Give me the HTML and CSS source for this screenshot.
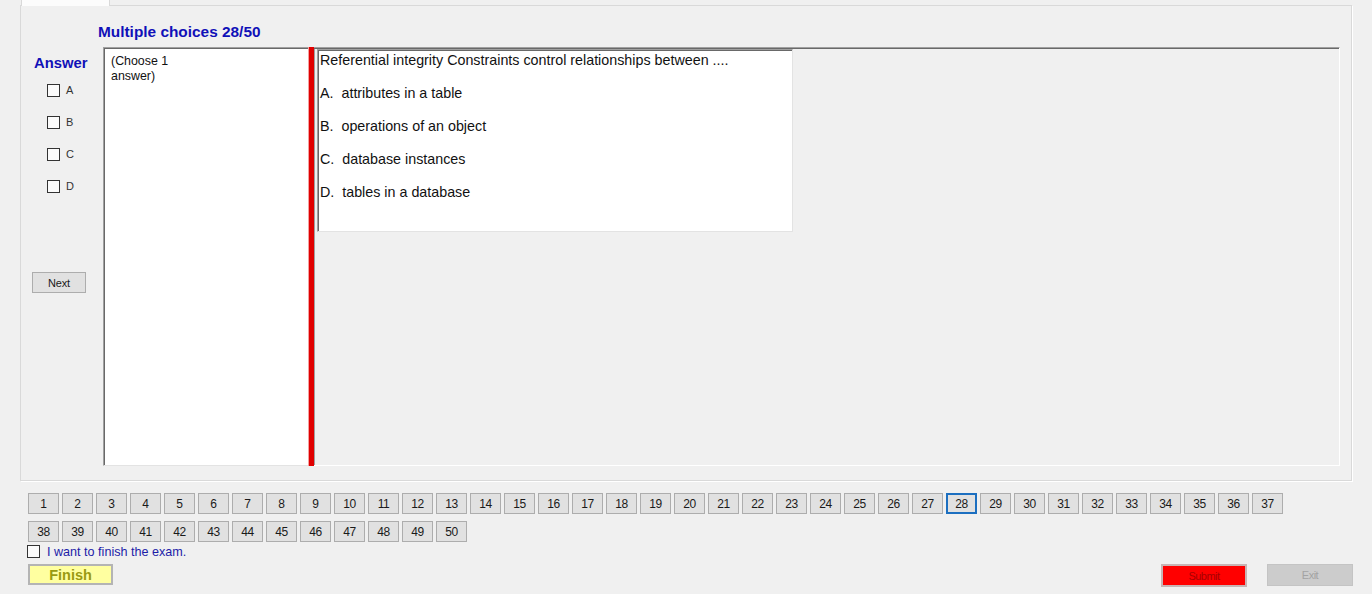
FILE: index.html
```html
<!DOCTYPE html>
<html>
<head>
<meta charset="utf-8">
<link rel="stylesheet" href="styles.css">
</head>
<body>
<div class="tabs"><div class="tab"></div></div>
<div class="tabpage">
  <div class="title">Multiple choices 28/50</div>
  <div class="main">
    <div class="answers">
      <div class="ans-h">Answer</div>
      <label class="opt-cb"><span class="cb"></span><span>A</span></label>
      <label class="opt-cb"><span class="cb"></span><span>B</span></label>
      <label class="opt-cb"><span class="cb"></span><span>C</span></label>
      <label class="opt-cb"><span class="cb"></span><span>D</span></label>
      <button class="btn next">Next</button>
    </div>
    <div class="choose">(Choose 1<br>answer)</div>
    <div class="redbar"></div>
    <div class="qpanel">
      <div class="qbox">
        <div class="qline">Referential integrity Constraints control relationships between ....</div>
        <div class="qline opt">A.  attributes in a table</div>
        <div class="qline opt">B.  operations of an object</div>
        <div class="qline opt">C.  database instances</div>
        <div class="qline opt">D.  tables in a database</div>
      </div>
    </div>
  </div>
</div>
<div class="footer">
  <div class="nums">
    <button class="btn num">1</button><button class="btn num">2</button><button class="btn num">3</button><button class="btn num">4</button><button class="btn num">5</button><button class="btn num">6</button><button class="btn num">7</button><button class="btn num">8</button><button class="btn num">9</button><button class="btn num">10</button>
    <button class="btn num">11</button><button class="btn num">12</button><button class="btn num">13</button><button class="btn num">14</button><button class="btn num">15</button><button class="btn num">16</button><button class="btn num">17</button><button class="btn num">18</button><button class="btn num">19</button><button class="btn num">20</button>
    <button class="btn num">21</button><button class="btn num">22</button><button class="btn num">23</button><button class="btn num">24</button><button class="btn num">25</button><button class="btn num">26</button><button class="btn num">27</button><button class="btn num current">28</button><button class="btn num">29</button><button class="btn num">30</button>
    <button class="btn num">31</button><button class="btn num">32</button><button class="btn num">33</button><button class="btn num">34</button><button class="btn num">35</button><button class="btn num">36</button><button class="btn num">37</button><button class="btn num">38</button><button class="btn num">39</button><button class="btn num">40</button>
    <button class="btn num">41</button><button class="btn num">42</button><button class="btn num">43</button><button class="btn num">44</button><button class="btn num">45</button><button class="btn num">46</button><button class="btn num">47</button><button class="btn num">48</button><button class="btn num">49</button><button class="btn num">50</button>
  </div>
  <label class="finish-cb"><span class="cb"></span><span>I want to finish the exam.</span></label>
  <div class="actions">
    <button class="finish">Finish</button>
    <button class="submit">Submit</button>
    <button class="exit">Exit</button>
  </div>
</div>
</body>
</html>
```
FILE: styles.css
```css
* { box-sizing: border-box; }
html, body { margin: 0; padding: 0; }
body {
  width: 1372px;
  height: 594px;
  overflow: hidden;
  background: #f0f0f0;
  font-family: "Liberation Sans", Arial, sans-serif;
  color: #000;
}
.tabs { height: 5px; padding-left: 21px; }
.tab {
  width: 89px;
  height: 6px;
  background: #fcfcfc;
  border-left: 1px solid #d9d9d9;
  border-right: 1px solid #d9d9d9;
  position: relative;
  z-index: 1;
}
.tabpage {
  margin-left: 20px;
  width: 1332px;
  height: 476px;
  border: 1px solid #d9d9d9;
  box-shadow: 1px 1px 0 #ffffff;
  padding-top: 18px;
}
.title {
  padding-left: 77px;
  font-size: 15.4px;
  line-height: 16px;
  font-weight: bold;
  color: #1010b8;
  margin-bottom: 7px;
}
.main {
  display: flex;
  height: 419px;
  margin-right: 11px;
}
.answers {
  width: 82px;
  flex: none;
  display: flex;
  flex-direction: column;
  align-items: flex-start;
}
.ans-h {
  padding-left: 13px;
  padding-top: 8px;
  font-size: 14.8px;
  line-height: 16px;
  font-weight: bold;
  color: #1010b8;
  margin-bottom: 3px;
}
.opt-cb {
  display: flex;
  align-items: center;
  height: 32px;
  padding-left: 26px;
  gap: 6px;
  font-size: 11px;
  color: #333;
}
.cb {
  width: 13px;
  height: 13px;
  border: 1px solid #333;
  background: #fbfbfb;
  display: inline-block;
  flex: none;
}
.btn {
  font-family: "Liberation Sans", Arial, sans-serif;
  background: #e1e1e1;
  border: 1px solid #adadad;
  padding: 0;
  color: #1a1a1a;
  font-size: 12px;
  letter-spacing: -0.4px;
}
.next {
  margin-top: 70px;
  margin-left: 11px;
  width: 54px;
  height: 21px;
  font-size: 11px;
  letter-spacing: -0.2px;
}
.choose {
  width: 206px;
  flex: none;
  height: 419px;
  background: #fff;
  border-left: 1px solid #a0a0a0;
  border-top: 1px solid #a0a0a0;
  border-right: 1px solid #f4f4f4;
  border-bottom: 1px solid #e3e3e3;
  box-shadow: inset 1px 1px 0 #696969;
  padding: 6px 0 0 7px;
  font-size: 12.4px;
  line-height: 15px;
  color: #111;
}
.redbar {
  width: 5px;
  flex: none;
  height: 419px;
  background: #e00000;
  box-shadow: -1px 0 0 #f4a0a0;
}
.qpanel {
  flex: 1;
  height: 419px;
  border-top: 1px solid #a0a0a0;
  border-right: 1px solid #ffffff;
  border-bottom: 1px solid #ffffff;
  box-shadow: inset 0 1px 0 #696969, inset 1px 0 0 #a0a0a0;
  padding: 1px 0 0 3px;
}
.qbox {
  width: 476px;
  height: 183px;
  background: #fff;
  border-left: 1px solid #a0a0a0;
  border-top: 1px solid #a0a0a0;
  border-right: 1px solid #e3e3e3;
  border-bottom: 1px solid #e3e3e3;
  box-shadow: inset 1px 1px 0 #696969;
  padding: 2px 0 0 2px;
  font-size: 14.3px;
  line-height: 17px;
  color: #111;
}
.qline { white-space: pre; }
.qline.opt { margin-top: 16px; }
.footer {
  padding: 12px 19px 0 28px;
}
.nums {
  display: grid;
  grid-template-columns: repeat(37, 31px);
  grid-auto-rows: 21px;
  column-gap: 3px;
  row-gap: 7px;
}
.num { width: 31px; height: 21px; font-size: 12px; }
.num.current {
  border: 2px solid #1c6fc0;
}
.finish-cb {
  display: flex;
  align-items: center;
  gap: 7px;
  margin-left: -1px;
  margin-top: 3px;
  height: 13px;
  font-size: 12.6px;
  color: #1c1ca8;
}
.actions {
  margin-top: 6px;
  display: flex;
  align-items: flex-start;
}
.finish {
  width: 85px;
  height: 21px;
  background: #ffffa0;
  border: 2px solid #b4b4b4;
  font-family: "Liberation Sans", Arial, sans-serif;
  font-weight: bold;
  font-size: 14.5px;
  color: #9a9a12;
  padding: 0;
  line-height: 16px;
}
.submit {
  margin-left: auto;
  width: 86px;
  height: 23px;
  background: #ff0000;
  border: 2px solid #c8b4b4;
  font-family: "Liberation Sans", Arial, sans-serif;
  font-size: 11px;
  letter-spacing: -0.5px;
  color: #a80000;
  padding: 0;
}
.exit {
  margin-left: 20px;
  width: 86px;
  height: 22px;
  background: #cccccc;
  border: 1px solid #c4c4c4;
  font-family: "Liberation Sans", Arial, sans-serif;
  font-size: 11px;
  letter-spacing: -0.5px;
  color: #a3a3a3;
  padding: 0;
}
```
